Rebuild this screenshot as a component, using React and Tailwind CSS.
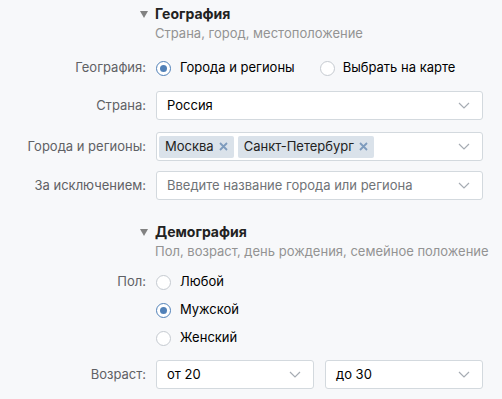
import React from 'react';

const Chevron = () => (
  <svg width="12" height="7" viewBox="0 0 12 7" className="shrink-0">
    <path d="M1 1l5 5 5-5" fill="none" stroke="#a6acb3" strokeWidth="1.2" />
  </svg>
);

const Radio = ({ checked }) => (
  <span
    className={`w-[15px] h-[15px] rounded-full border flex items-center justify-center bg-white shrink-0 ${
      checked ? 'border-[#5181b8]' : 'border-[#c5cad0]'
    }`}
  >
    {checked && <span className="w-[7px] h-[7px] rounded-full bg-[#5181b8]" />}
  </span>
);

const Tag = ({ children }) => (
  <span className="h-[22px] px-[6px] flex items-center gap-[5px] bg-[#dae2ea] rounded-[2px] text-[#222]">
    {children}
    <svg width="9" height="9" viewBox="0 0 9 9">
      <path d="M1 1l7 7M8 1l-7 7" stroke="#7d9bbd" strokeWidth="1.8" />
    </svg>
  </span>
);

const Row = ({ label, children, className = '' }) => (
  <div className={`flex items-center ${className}`}>
    <div className="w-[146px] text-right text-[#5f6165] shrink-0">{label}</div>
    <div className="pl-[10px] flex-1 flex items-center">{children}</div>
  </div>
);

const Select = ({ children, placeholder, className = 'w-[327px]' }) => (
  <div className={`h-[29px] bg-white border border-[#d3d9de] rounded-[3px] flex items-center justify-between pl-[10px] pr-[12px] ${className}`}>
    <span className={placeholder ? 'text-[#6f7377]' : 'text-black'}>{children}</span>
    <Chevron />
  </div>
);

const Section = ({ title, sub }) => (
  <div className="flex">
    <div className="w-[148px] flex justify-end pt-[6px]">
      <svg width="8" height="7" viewBox="0 0 8 7">
        <path d="M0 0h8L4 7z" fill="#828282" />
      </svg>
    </div>
    <div className="pl-[7px]">
      <div className="text-[14px] font-bold text-[#222] leading-[18px]">{title}</div>
      <div className="text-[#939393] leading-[17px] mt-[2px]">{sub}</div>
    </div>
  </div>
);

export default function App() {
  return (
    <div
      className="w-[502px] h-[399px] bg-[#f7f8fa] overflow-hidden text-[13px] pt-[5px]"
      style={{ fontFamily: 'Inter, Roboto, "Liberation Sans", sans-serif' }}
    >
      <Section title="География" sub="Страна, город, местоположение" />

      <Row label="География:" className="mt-[16px] h-[20px]">
        <div className="flex items-center gap-[9px]">
          <Radio checked />
          <span className="text-black">Города и регионы</span>
        </div>
        <div className="flex items-center gap-[8px] ml-[25px]">
          <Radio />
          <span className="text-black">Выбрать на карте</span>
        </div>
      </Row>

      <Row label="Страна:" className="mt-[13px]">
        <Select>Россия</Select>
      </Row>

      <Row label="Города и регионы:" className="mt-[12px]">
        <div className="w-[327px] h-[29px] bg-white border border-[#d3d9de] rounded-[3px] flex items-center justify-between pl-[2px] pr-[12px]">
          <div className="flex gap-[4px]">
            <Tag>Москва</Tag>
            <Tag>Санкт-Петербург</Tag>
          </div>
          <Chevron />
        </div>
      </Row>

      <Row label="За исключением:" className="mt-[10px]">
        <Select placeholder>Введите название города или региона</Select>
      </Row>

      <div className="mt-[23px]">
        <Section title="Демография" sub="Пол, возраст, день рождения, семейное положение" />
      </div>

      <Row label="Пол:" className="mt-[12px] h-[20px]">
        <div className="flex items-center gap-[9px]">
          <Radio />
          <span className="text-black">Любой</span>
        </div>
      </Row>
      <Row label="" className="mt-[8px] h-[20px]">
        <div className="flex items-center gap-[9px]">
          <Radio checked />
          <span className="text-black">Мужской</span>
        </div>
      </Row>
      <Row label="" className="mt-[8px] h-[20px]">
        <div className="flex items-center gap-[9px]">
          <Radio />
          <span className="text-black">Женский</span>
        </div>
      </Row>

      <Row label="Возраст:" className="mt-[12px]">
        <div className="flex gap-[11px]">
          <Select className="w-[158px]">от 20</Select>
          <Select className="w-[158px]">до 30</Select>
        </div>
      </Row>
    </div>
  );
}
